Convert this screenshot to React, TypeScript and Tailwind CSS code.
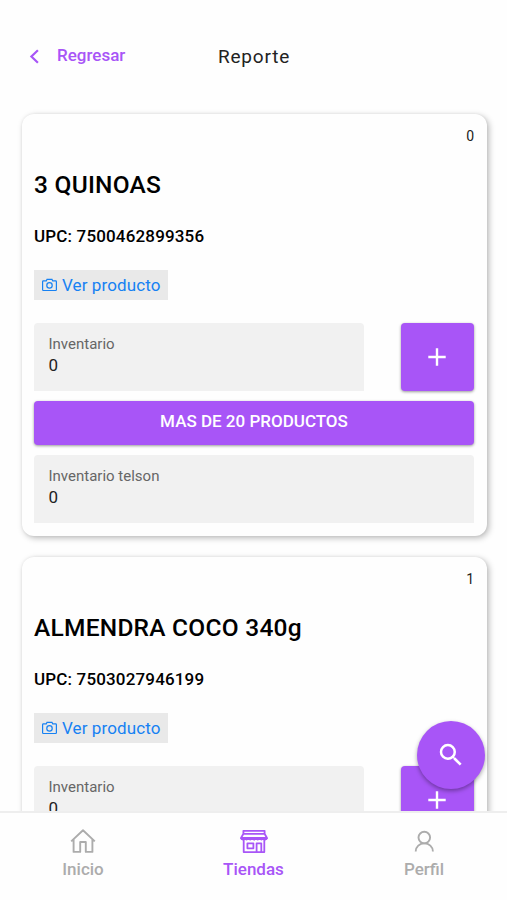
import type { ReactNode } from "react";

type Product = {
  name: string;
  upc: string;
  stock: number;
  telson: number;
};

const products: Product[] = [
  { name: "3 QUINOAS", upc: "7500462899356", stock: 0, telson: 0 },
  { name: "ALMENDRA COCO 340g", upc: "7503027946199", stock: 0, telson: 0 },
];

export default function App() {
  return (
    <div className="flex h-[900px] w-[507px] flex-col overflow-hidden bg-[#fefefe] font-[Roboto,sans-serif]">
      <header className="grid h-[104px] shrink-0 grid-cols-3 pt-[42px]">
        <button className="flex h-7 items-center pl-[29px] text-[#a855f7]">
          <svg width="10" height="15" viewBox="0 0 10 15" fill="none" stroke="currentColor" strokeWidth="2.2">
            <path d="M8.9 1.2 2.4 7.5l6.5 6.3" />
          </svg>
          <span className="ml-[18px] text-[17px] font-medium">Regresar</span>
        </button>
        <h1 className="flex h-[31px] items-center justify-center pl-px text-[19px] tracking-[0.8px] text-[#222]">
          Reporte
        </h1>
      </header>

      <div className="relative min-h-0 flex-1">
        <main className="flex h-full flex-col gap-[21px] overflow-hidden pt-[10px] pr-5 pl-[22px]">
          {products.map((product, index) => (
            <ProductCard key={product.upc} product={product} index={index} />
          ))}
        </main>

        <button className="absolute right-[22px] bottom-[22px] flex size-[68px] items-center justify-center rounded-full bg-[#a855f7] text-white shadow-[0_2px_4px_rgba(0,0,0,0.35)]">
          <svg width="30" height="30" viewBox="0 0 24 24" fill="currentColor">
            <path d="M15.5 14h-.79l-.28-.27A6.47 6.47 0 0 0 16 9.5 6.5 6.5 0 1 0 9.5 16c1.61 0 3.09-.59 4.23-1.57l.27.28v.79l5 4.99L20.49 19l-4.99-5zm-6 0a4.5 4.5 0 1 1 0-9 4.5 4.5 0 0 1 0 9z" />
          </svg>
        </button>
      </div>

      <nav className="flex h-[89px] shrink-0 justify-center border-t-2 border-[#eee] bg-[#fefefe]">
        <TabItem label="Inicio" icon={<HomeIcon />} />
        <TabItem label="Tiendas" icon={<StoreIcon />} active />
        <TabItem label="Perfil" icon={<UserIcon />} />
      </nav>
    </div>
  );
}

type ProductCardProps = {
  product: Product;
  index: number;
};

function ProductCard({ product, index }: ProductCardProps) {
  return (
    <section className="flex h-[422px] shrink-0 flex-col rounded-[12px] bg-[#fefefe] pt-[14px] pr-[13px] pl-3 shadow-[2px_2px_6px_rgba(0,0,0,0.27),0_0_3px_rgba(0,0,0,0.06)]">
      <p className="text-right text-[14px] leading-4 text-[#222]">{index}</p>

      <h2 className="mt-[25px] text-[24.5px] leading-8 font-medium tracking-[0.25px] text-black">
        {product.name}
      </h2>

      <p className="mt-[23px] text-[17px] leading-6 font-medium tracking-[0.16px] text-black">
        UPC: {product.upc}
      </p>

      <button className="mt-[22px] flex h-[30px] w-[134px] items-center bg-[#e9e9e9] pl-2 text-[#1681f3]">
        <CameraIcon />
        <span className="ml-[5px] pt-px text-[17px] tracking-[0.1px]">Ver producto</span>
      </button>

      <div className="mt-[23px] flex justify-between">
        <Field label="Inventario" value={product.stock} className="w-[330px]" />
        <button className="flex h-[68px] w-[73px] items-center justify-center rounded-[4px] bg-[#a855f7] pr-px text-white shadow-[0_1px_3px_rgba(0,0,0,0.4)]">
          <svg width="18" height="18" viewBox="0 0 18 18" fill="none" stroke="currentColor" strokeWidth="2.4">
            <path d="M9 0.3v17.4M0.3 9h17.4" />
          </svg>
        </button>
      </div>

      <button className="mt-[10px] flex h-11 shrink-0 items-center justify-center rounded-[4px] bg-[#a855f7] pb-0.5 text-[17px] font-medium text-white shadow-[0_1px_3px_rgba(0,0,0,0.4)]">
        MAS DE 20 PRODUCTOS
      </button>

      <Field label="Inventario telson" value={product.telson} className="mt-[10px] w-full" />
    </section>
  );
}

type FieldProps = {
  label: string;
  value: number;
  className: string;
};

function Field({ label, value, className }: FieldProps) {
  return (
    <div className={`h-[68px] shrink-0 rounded-t-[4px] bg-[#f1f1f1] pt-[11px] pl-[14.5px] ${className}`}>
      <p className="text-[15px] leading-5 text-[#666]">{label}</p>
      <p className="text-[17px] leading-[23px] text-[#222]">{value}</p>
    </div>
  );
}

type TabItemProps = {
  label: string;
  icon: ReactNode;
  active?: boolean;
};

function TabItem({ label, icon, active }: TabItemProps) {
  return (
    <button
      className={`flex w-[170.5px] shrink-0 flex-col items-center pt-[14px] ${active ? "text-[#a855f7]" : "text-[#acacac]"}`}
    >
      {icon}
      <span className="mt-[2px] text-[17px] leading-6 font-medium">{label}</span>
    </button>
  );
}

function CameraIcon() {
  return (
    <svg width="15" height="14" viewBox="0 0 15 14" fill="none" stroke="currentColor" strokeWidth="1.2">
      <path d="M1.4 2.9h2.9l.7-1.6h5l.7 1.6h2.9a.8.8 0 0 1 .8.8v8a.8.8 0 0 1-.8.8H1.4a.8.8 0 0 1-.8-.8v-8a.8.8 0 0 1 .8-.8Z" />
      <circle cx="7.5" cy="7.4" r="2.7" />
    </svg>
  );
}

function HomeIcon() {
  return (
    <svg width="28" height="28" viewBox="0 0 28 28" fill="none" stroke="currentColor" strokeWidth="1.9">
      <path d="M2.2 14.4 14 3.2l11.8 11.2M4.6 12.4v12.5h6.6v-9.9h5.6v9.9h6.6V12.4" strokeLinejoin="round" />
    </svg>
  );
}

function StoreIcon() {
  return (
    <svg width="28" height="28" viewBox="0 0 28 28" fill="none" stroke="currentColor" strokeWidth="1.8" strokeLinejoin="round">
      <path d="M3.4 3.8h21.2v3H3.4zM3.4 6.8 1 11h26l-2.4-4.2" />
      <path d="M1 11c.3 2.2 3.4 2.2 3.7 0 .3 2.2 3.4 2.2 3.7 0 .3 2.2 3.4 2.2 3.7 0 .3 2.2 3.5 2.2 3.8 0 .3 2.2 3.4 2.2 3.7 0 .3 2.2 3.4 2.2 3.7 0 .3 2.2 3.4 2.2 3.7 0" />
      <path d="M3.7 12.6v12.5h20.6V12.6M16.6 25v-8.7h4.7V25M7.4 16.3h6v5H7.4z" />
    </svg>
  );
}

function UserIcon() {
  return (
    <svg width="28" height="28" viewBox="0 0 28 28" fill="none" stroke="currentColor" strokeWidth="1.9">
      <circle cx="14.3" cy="10.6" r="5.8" />
      <path d="M5.7 24.5c0-4.8 3.9-8.1 8.6-8.1s8.6 3.3 8.6 8.1" />
    </svg>
  );
}
